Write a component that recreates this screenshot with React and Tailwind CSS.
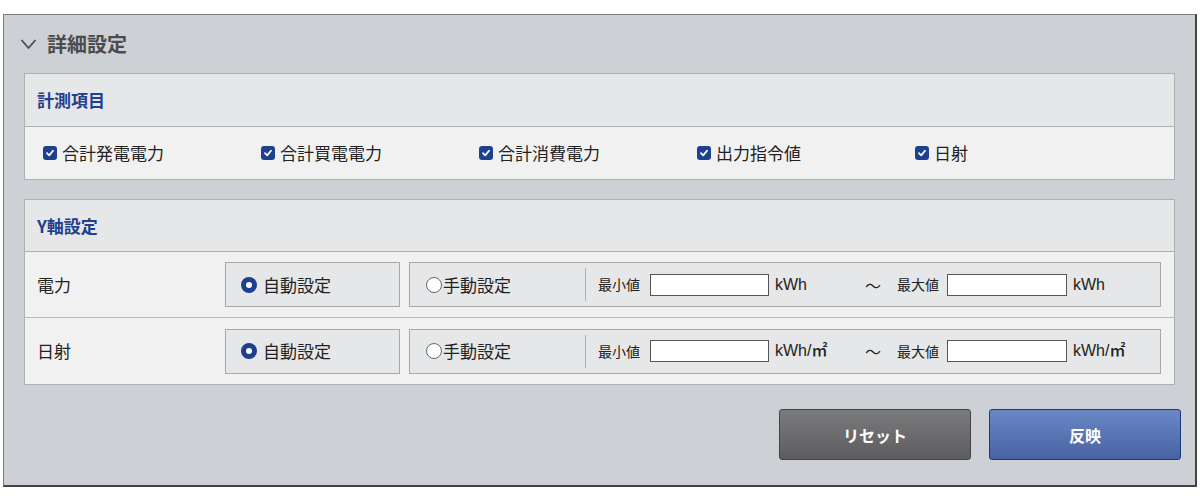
const font = { fontFamily: '"Noto Sans CJK JP", "Noto Sans", sans-serif' };
const latin = { fontFamily: '"Liberation Sans", "Noto Sans CJK JP", sans-serif' };

const Check = ({ label }) => (
  <label className="flex items-center gap-[5px] w-[218px] text-[17px] text-[#222]">
    <span className="w-[14px] h-[14px] rounded-[3px] bg-[#1f3f8f] flex items-center justify-center">
      <svg width="10" height="10" viewBox="0 0 10 10">
        <path d="M2 5.2 L4.2 7.4 L8 2.8" stroke="white" strokeWidth="1.8" fill="none" strokeLinecap="round" strokeLinejoin="round" />
      </svg>
    </span>
    {label}
  </label>
);

const Radio = ({ on }) =>
  on ? (
    <span className="w-[16px] h-[16px] rounded-full bg-[#1f3f8f] flex items-center justify-center">
      <span className="w-[6px] h-[6px] rounded-full bg-white" />
    </span>
  ) : (
    <span className="w-[16px] h-[16px] rounded-full bg-white border border-[#666]" />
  );

const AxisRow = ({ label, unit, last }) => (
  <div className={"flex items-center h-[66px] pl-[12px] pr-[13px] bg-[#f1f1f1] " + (last ? "" : "border-b border-[#b9b9b9]")}>
    <div className="w-[188px] text-[17px] text-[#222]">{label}</div>
    <div className="w-[175px] h-[45px] border border-[#a9a9a9] bg-[#e6e7e8] flex items-center gap-[6px] pl-[15px] text-[17px] text-[#222]">
      <Radio on />
      自動設定
    </div>
    <div className="ml-[9px] flex-1 h-[45px] border border-[#a9a9a9] bg-[#e6e7e8] flex items-center text-[#222]">
      <div className="w-[175px] flex items-center gap-[1px] pl-[16px] text-[17px]">
        <Radio />
        手動設定
      </div>
      <div className="w-px h-[33px] bg-[#b0b0b0]" />
      <span className="ml-[12px] text-[14px]">最小値</span>
      <span className="ml-[10px] w-[119px] h-[22px] bg-white border border-[#555]" />
      <span className="ml-[6px] w-[90px] text-[16px] font-medium" style={latin}>{unit}</span>
      <span className="text-[16px]">〜</span>
      <span className="ml-[16px] text-[14px]">最大値</span>
      <span className="ml-[8px] w-[120px] h-[22px] bg-white border border-[#555]" />
      <span className="ml-[6px] text-[16px] font-medium" style={latin}>{unit}</span>
    </div>
  </div>
);

export default function App() {
  return (
    <div className="w-[1200px] h-[500px] bg-white pt-[14px] pl-[3px] pr-[3px]" style={font}>
      <div className="h-[473px] bg-[#cdd0d4] border border-[#7d7d7d] border-b-2 border-r-2 border-b-[#444] border-r-[#444] px-[20px]">
        <div className="h-[58px] flex items-center gap-[10px] ml-[-4px] text-[#4c4c4c]">
          <svg width="17" height="12" viewBox="0 0 17 12">
            <path d="M1.5 2 L8.5 10 L15.5 2" stroke="#4c4c4c" strokeWidth="1.8" fill="none" />
          </svg>
          <span className="text-[20px] font-bold">詳細設定</span>
        </div>

        <div className="border border-[#b0b0b0]">
          <div className="h-[53px] bg-[#e6e7e8] border-b border-[#b0b0b0] flex items-center pl-[12px] text-[17px] font-bold text-[#1f3f8f]">計測項目</div>
          <div className="h-[52px] bg-[#f1f1f1] flex items-center pl-[18px]">
            <Check label="合計発電電力" />
            <Check label="合計買電電力" />
            <Check label="合計消費電力" />
            <Check label="出力指令値" />
            <Check label="日射" />
          </div>
        </div>

        <div className="mt-[19px] border border-[#b0b0b0]">
          <div className="h-[52px] bg-[#e6e7e8] border-b border-[#b0b0b0] flex items-center pl-[12px] text-[17px] font-bold text-[#1f3f8f]">Y軸設定</div>
          <AxisRow label="電力" unit="kWh" />
          <AxisRow label="日射" unit="kWh/㎡" last />
        </div>

        <div className="mt-[24px] flex justify-end gap-[18px] mr-[-6px]">
          <button className="w-[192px] h-[51px] rounded-[3px] border border-[#444] bg-gradient-to-b from-[#7b7b7d] to-[#5d5d5f] text-white text-[16px] font-bold">リセット</button>
          <button className="w-[192px] h-[51px] rounded-[3px] border border-[#1c3a80] bg-gradient-to-b from-[#6b88c6] to-[#4763a2] text-white text-[16px] font-bold">反映</button>
        </div>
      </div>
    </div>
  );
}
